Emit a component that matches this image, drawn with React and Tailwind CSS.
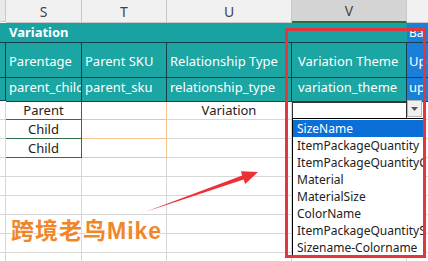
import React from "react";

const cols = "grid-cols-[6px_76px_85px_125px_115px_21px]";

const themes = [
  "SizeName",
  "ItemPackageQuantity",
  "ItemPackageQuantityColor",
  "Material",
  "MaterialSize",
  "ColorName",
  "ItemPackageQuantitySize",
  "Sizename-Colorname"
];

function HeadCell({ children, active }) {
  return (
    <div
      className={
        "flex items-center justify-center border-r border-[#c9c9c9] text-[14px] text-[#444] " +
        (active ? "bg-[#d4d4d4] border-b-2 border-b-[#217346]" : "bg-[#f1f1f1] border-b border-b-[#c9c9c9]")
      }
    >
      {children}
    </div>
  );
}

function TealCell({ children, className = "" }) {
  return (
    <div
      className={
        "flex items-end overflow-hidden whitespace-nowrap border-r border-b border-[#173f4a] bg-[#1ba5a3] px-[3px] text-[13px] text-white " +
        className
      }
    >
      {children}
    </div>
  );
}

function BlankRow({ h }) {
  return (
    <>
      <div className={`${h} border-r border-b border-[#d6d6d6]`} />
      <div className={`${h} border-r border-b border-[#d6d6d6]`} />
      <div className={`${h} border-r border-b border-[#d6d6d6]`} />
      <div className={`${h} border-r border-b border-[#d6d6d6]`} />
      <div className={`${h} border-r border-b border-[#d6d6d6]`} />
      <div className={`${h} border-b border-[#d6d6d6]`} />
    </>
  );
}

export default function App() {
  return (
    <div
      className="relative h-[261px] w-[428px] overflow-hidden bg-white"
      style={{ fontFamily: '"Noto Sans", "Noto Sans CJK SC", sans-serif' }}
    >
      <div className={`grid ${cols}`}>
        {/* column letters */}
        <div className="h-[22px] border-r border-b border-[#c9c9c9] bg-[#e9e9e9]" />
        <HeadCell>S</HeadCell>
        <HeadCell>T</HeadCell>
        <HeadCell>U</HeadCell>
        <HeadCell active>V</HeadCell>
        <div className="border-b border-[#c9c9c9] bg-[#f1f1f1]" />

        {/* group row */}
        <div className="col-span-5 flex h-[20px] items-center border-b border-[#173f4a] bg-[#19a2a2] pl-[9px] text-[13px] font-bold text-white">
          Variation
        </div>
        <div className="flex items-center overflow-hidden border-b border-[#173f4a] bg-[#1a7fd8] pl-[2px] text-[12px] text-white">
          Ba
        </div>

        {/* label row */}
        <div className="h-[35px] border-r border-b border-[#173f4a] bg-[#1ba5a3]" />
        <TealCell className="pb-[6px]">Parentage</TealCell>
        <TealCell className="pb-[6px]">Parent SKU</TealCell>
        <TealCell className="pb-[6px]">Relationship Type</TealCell>
        <TealCell className="pb-[6px] pl-[6px]">Variation Theme</TealCell>
        <div className="flex items-end overflow-hidden border-b border-[#173f4a] bg-[#1a7fd8] pb-[6px] pl-[2px] text-[13px] text-white">
          Up
        </div>

        {/* field name row */}
        <div className="h-[23px] border-r border-b border-[#173f4a] bg-[#1ba5a3]" />
        <TealCell className="pb-[3px]">parent_child</TealCell>
        <TealCell className="pb-[3px]">parent_sku</TealCell>
        <TealCell className="pb-[3px]">relationship_type</TealCell>
        <TealCell className="pb-[3px] pl-[6px]">variation_theme</TealCell>
        <div className="flex items-end overflow-hidden border-b border-[#173f4a] bg-[#1a7fd8] pb-[3px] pl-[2px] text-[13px] text-white">
          up
        </div>

        {/* Parent row */}
        <div className="h-[18px] border-r border-b border-[#d6d6d6]" />
        <div className="flex items-end justify-center border-r border-b border-[#2f6f47] text-[13px] leading-[17px] text-[#222]">
          Parent
        </div>
        <div className="border-r border-b border-[#f3c48e]" />
        <div className="flex items-end justify-center border-r border-b border-[#d6d6d6] text-[13px] leading-[17px] text-[#222]">
          Variation
        </div>
        <div className="flex border border-[#333] bg-white">
          <div className="flex-1" />
        </div>
        <div className="border-b border-[#d6d6d6]" />

        {/* Child rows */}
        {[0, 1].map((i) => (
          <React.Fragment key={i}>
            <div className="h-[19px] border-r border-b border-[#d6d6d6]" />
            <div className="flex items-end justify-center border-r border-b border-[#2f6f47] text-[13px] leading-[18px] text-[#222]">
              Child
            </div>
            <div className="border-r border-b border-[#f3c48e]" />
            <div className="border-r border-b border-[#d6d6d6]" />
            <div className="border-r border-b border-[#d6d6d6]" />
            <div className="border-b border-[#d6d6d6]" />
          </React.Fragment>
        ))}

        <BlankRow h="h-[19px]" />
        <BlankRow h="h-[19px]" />
        <BlankRow h="h-[19px]" />
        <BlankRow h="h-[19px]" />
        <BlankRow h="h-[19px]" />
        <BlankRow h="h-[19px]" />
      </div>

      {/* dropdown button */}
      <div className="absolute left-[407px] top-[100px] flex h-[17px] w-[15px] items-center justify-center border border-[#b5b5b5] bg-[#f0f0f0]">
        <svg width="7" height="4" viewBox="0 0 7 4">
          <path d="M0 0h7L3.5 4z" fill="#555" />
        </svg>
      </div>

      {/* dropdown list */}
      <div className="absolute left-[292px] top-[118px] flex w-[132px] flex-col overflow-hidden border border-black bg-white py-px text-[12px] leading-[17px] text-[#222]">
        {themes.map((t, i) => (
          <div
            key={t}
            className={"whitespace-nowrap pl-[4px] " + (i === 0 ? "bg-[#0a6fd6] text-white" : "")}
          >
            {t}
          </div>
        ))}
      </div>

      {/* red highlight box */}
      <div className="absolute left-[285px] top-[28px] h-[230px] w-[141px] border-[3px] border-[#e2383d]" />

      {/* arrow */}
      <svg className="absolute left-0 top-0" width="428" height="261" viewBox="0 0 428 261">
        <polygon
          points="145,212 242.2,175.4 240.9,171.2 258,172 245.2,184 243.6,179.4"
          fill="#ea3136"
        />
      </svg>

      {/* watermark */}
      <div
        className="absolute left-[11px] top-[214px] text-[23px] font-bold tracking-[1px] text-[#f0862a] [text-shadow:0_0_2px_#fff,0_0_2px_#fff,0_0_3px_#fff]"
        style={{ fontFamily: '"Liberation Sans", "Noto Sans CJK SC", sans-serif' }}
      >
        跨境老鸟Mike
      </div>
    </div>
  );
}
